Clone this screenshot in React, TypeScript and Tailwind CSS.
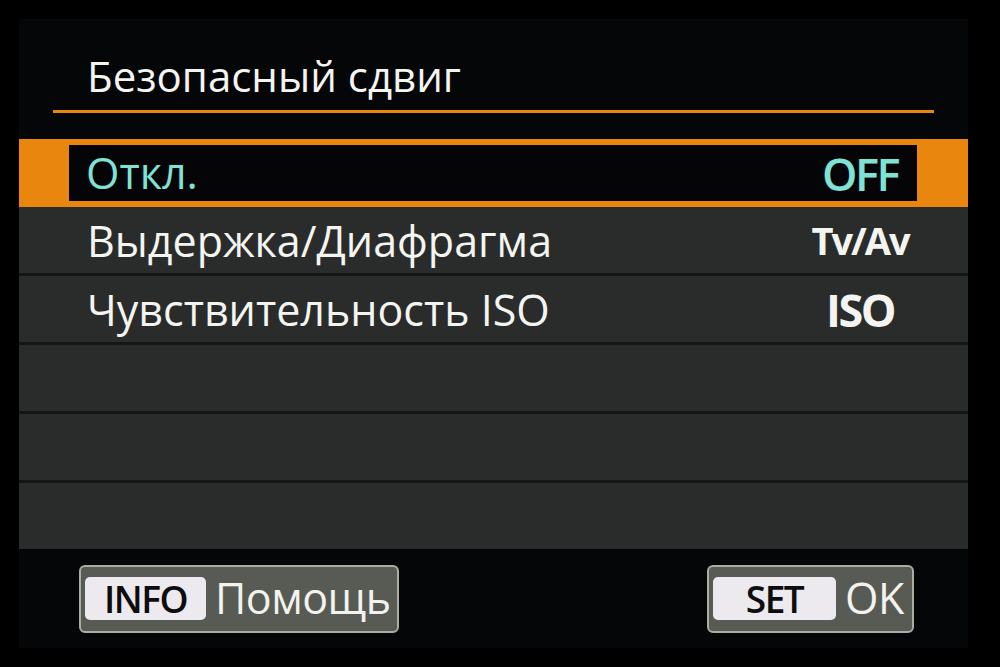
import type { JSX } from 'react';

const rows: Array<{ label: string; value: string; valueClass: string }> = [
  { label: 'Выдержка/Диафрагма', value: 'Tv/Av', valueClass: 'text-[38px] tracking-[-2px]' },
  { label: 'Чувствительность ISO', value: 'ISO', valueClass: 'text-[45px] tracking-[-2.5px]' },
  { label: '', value: '', valueClass: '' },
  { label: '', value: '', valueClass: '' },
  { label: '', value: '', valueClass: '' },
];

function FooterButton({
  keyLabel,
  text,
  keyWidth,
  width,
}: {
  keyLabel: string;
  text: string;
  keyWidth: string;
  width: string;
}): JSX.Element {
  return (
    <div className={`flex h-[68px] ${width} items-center gap-[9px] rounded-[6px] border-2 border-[#a9ada2] bg-[#585b54] pl-[4px]`}>
      <span
        className={`flex h-[43px] ${keyWidth} items-center justify-center rounded-[5px] bg-[#eceaee] pb-[1px] text-[37px] font-semibold leading-none tracking-[-1.5px] text-[#0d0d0d]`}
      >
        {keyLabel}
      </span>
      <span className="pb-[2px] text-[43px] leading-none tracking-[-0.5px] text-[#f2f2ee]">{text}</span>
    </div>
  );
}

export default function App(): JSX.Element {
  return (
    <div className="h-[667px] w-[1000px] bg-black p-[19px] pr-[32px] font-['Open_Sans',sans-serif]">
      <div className="flex h-[629px] w-[949px] flex-col bg-[#050608]">
        <header className="flex h-[120px] flex-col px-[34px]">
          <h1 className="mt-[29px] pl-[34px] text-[42px] leading-[56px] text-[#f4f4f0]">Безопасный сдвиг</h1>
          <div className="mt-[6px] h-[3px] w-full bg-[#e8860e]" />
        </header>

        <div className="h-[68px] bg-[#e8860e] py-[6px] pl-[50px] pr-[51px]">
          <div className="flex h-full items-center justify-between bg-[#050507] pl-[17px] pr-[2px]">
            <span className="pb-[1px] text-[43px] leading-none text-[#7fe2d5]">Откл.</span>
            <span className="w-[110px] text-center text-[45px] font-semibold leading-none tracking-[-2.5px] text-[#7fe2d5]">
              OFF
            </span>
          </div>
        </div>

        <div className="flex flex-col gap-[3px] bg-[#141616]">
          {rows.map((row, i) => (
            <div key={i} className="flex h-[66px] items-center justify-between bg-[#292c2b] pl-[68px] pr-[53px]">
              <span className="text-[43px] leading-none text-[#f4f4f0]">{row.label}</span>
              <span className={`w-[110px] text-center font-bold leading-none text-[#f4f4f0] ${row.valueClass}`}>{row.value}</span>
            </div>
          ))}
        </div>

        <footer className="flex flex-1 items-center justify-between pl-[60px] pr-[54px]">
          <FooterButton keyLabel="INFO" text="Помощь" keyWidth="w-[121px]" width="w-[320px]" />
          <FooterButton keyLabel="SET" text="OK" keyWidth="w-[123px]" width="w-[207px]" />
        </footer>
      </div>
    </div>
  );
}
